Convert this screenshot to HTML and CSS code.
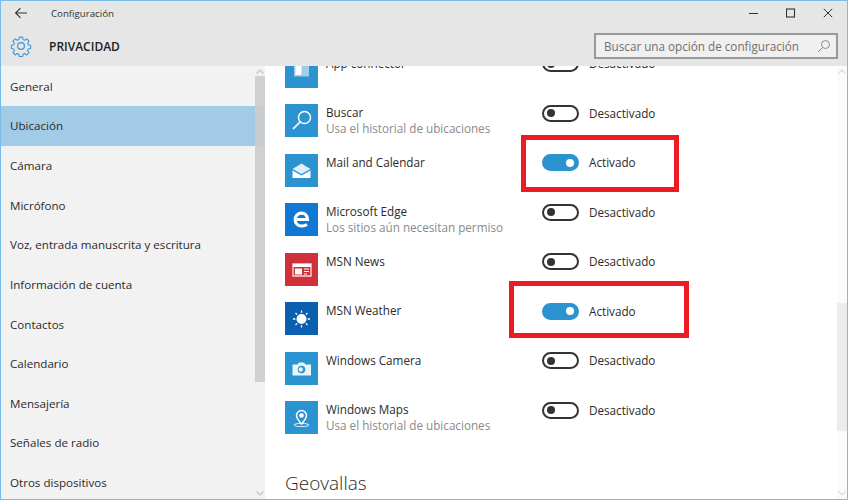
FILE: index.html
```html
<!DOCTYPE html>
<html lang="es">
<head>
<meta charset="utf-8">
<title>Configuración</title>
<link rel="stylesheet" href="styles.css">
</head>
<body>
<div class="window">
  <header class="header">
    <div class="titlebar">
      <svg class="back" width="14" height="12" viewBox="0 0 14 12"><path d="M13 6H2M6.500 1.200 1.600 6l4.900 4.800" fill="none" stroke="#333" stroke-width="1.100"/></svg>
      <span class="title">Configuración</span>
      <div class="controls">
        <svg width="10" height="10" viewBox="0 0 10 10"><path d="M0 5.500h9" stroke="#333" stroke-width="1"/></svg>
        <svg width="10" height="10" viewBox="0 0 10 10"><rect x=".5" y="1" width="8" height="8" fill="none" stroke="#333" stroke-width="1.100"/></svg>
        <svg width="10" height="10" viewBox="0 0 10 10"><path d="M.8.800l8.400 8.400M9.200.800.800 9.200" stroke="#333" stroke-width="1"/></svg>
      </div>
    </div>
    <div class="pagebar">
      <svg class="gear" width="22" height="22" viewBox="0 0 24 24" fill="none" stroke="#3a96d2" stroke-width="1.300" stroke-linejoin="round"><circle cx="12" cy="12" r="3.700"/><path d="M10 1.500h4l.6 3.100 1.900.8 2.700-1.800 2.800 2.800-1.800 2.700.8 1.900 3 .6v4l-3 .6-.8 1.900 1.800 2.700-2.800 2.800-2.700-1.800-1.900.8-.6 3h-4l-.6-3-1.900-.8-2.700 1.800-2.800-2.800 1.800-2.700-.8-1.900-3-.6v-4l3-.6.8-1.900-1.800-2.700 2.800-2.800 2.700 1.800 1.900-.8z" transform="translate(12 12) scale(.88) translate(-12 -12.500)"/></svg>
      <h1 class="page-name">PRIVACIDAD</h1>
      <div class="search">
        <span class="search-text">Buscar una opción de configuración</span>
        <svg width="14" height="14" viewBox="0 0 14 14" fill="none" stroke="#8a8a8a" stroke-width="1"><circle cx="8.500" cy="5.500" r="4"/><path d="M5.500 8.500 1 13"/></svg>
      </div>
    </div>
  </header>
  <div class="body">
    <nav class="sidebar">
      <a class="nav-item">General</a>
      <a class="nav-item selected">Ubicación</a>
      <a class="nav-item">Cámara</a>
      <a class="nav-item">Micrófono</a>
      <a class="nav-item">Voz, entrada manuscrita y escritura</a>
      <a class="nav-item">Información de cuenta</a>
      <a class="nav-item">Contactos</a>
      <a class="nav-item">Calendario</a>
      <a class="nav-item">Mensajería</a>
      <a class="nav-item">Señales de radio</a>
      <a class="nav-item">Otros dispositivos</a>
      <svg class="chev chev-up" width="8" height="5" viewBox="0 0 8 5"><path d="M.5 4.500 4 1l3.500 3.500" fill="none" stroke="#c4c4c4" stroke-width="1.200"/></svg>
      <div class="thumb side-thumb"></div>
      <svg class="chev chev-down" width="8" height="5" viewBox="0 0 8 5"><path d="M.5.500 4 4 7.500.500" fill="none" stroke="#c4c4c4" stroke-width="1.200"/></svg>
    </nav>
    <main class="content">
      <div class="rows">
        <div class="row">
          <div class="app blue"><svg width="33" height="33" viewBox="0 0 33 33"><rect x="9" y="8.500" width="15" height="13" fill="#fff" opacity=".55"/><rect x="10.500" y="10" width="6" height="10" fill="#fff"/></svg></div>
          <div class="info"><div class="name">App connector</div></div>
          <div class="toggle"></div><span class="state">Desactivado</span>
        </div>
        <div class="row">
          <div class="app blue"><svg width="33" height="33" viewBox="0 0 33 33" fill="none" stroke="#fff"><circle cx="19.500" cy="13.500" r="6" stroke-width="1.500"/><path d="M15 18 8 25" stroke-width="1.800" opacity=".85"/></svg></div>
          <div class="info"><div class="name">Buscar</div><div class="sub">Usa el historial de ubicaciones</div></div>
          <div class="toggle"></div><span class="state">Desactivado</span>
        </div>
        <div class="row">
          <div class="app blue"><svg width="33" height="33" viewBox="0 0 33 33"><path d="M7.500 15 16.500 9.500l9 5.500-9 5z" fill="#fff" opacity=".85"/><path d="M7.500 16.500l9 5 9-5v7.500h-18z" fill="#fff"/></svg></div>
          <div class="info"><div class="name">Mail and Calendar</div></div>
          <div class="toggle on"></div><span class="state">Activado</span>
        </div>
        <div class="row">
          <div class="app edge"><svg width="33" height="33" viewBox="0 0 33 33" fill="none" stroke="#fff" stroke-width="3.200"><path d="M10 16.500h12.500c0-4-2.500-6.300-6-6.300-3.800 0-6.300 2.900-6.300 6.500s2.600 6.300 6.500 6.300c2.300 0 4-.6 5.300-1.500"/></svg></div>
          <div class="info"><div class="name">Microsoft Edge</div><div class="sub">Los sitios aún necesitan permiso</div></div>
          <div class="toggle"></div><span class="state">Desactivado</span>
        </div>
        <div class="row">
          <div class="app red"><svg width="33" height="33" viewBox="0 0 33 33"><path d="M8 11h18v12H8z" fill="none" stroke="#fff" stroke-width="1.400" opacity=".8"/><rect x="8" y="11" width="18" height="3" fill="#fff"/><rect x="10" y="15.500" width="7" height="6" fill="#fff"/><path d="M19 16h5M19 18.500h5M19 21h3" stroke="#fff" stroke-width="1"/></svg></div>
          <div class="info"><div class="name">MSN News</div></div>
          <div class="toggle"></div><span class="state">Desactivado</span>
        </div>
        <div class="row">
          <div class="app navy"><svg width="33" height="33" viewBox="0 0 33 33"><circle cx="16.500" cy="17" r="5" fill="#fff"/><path d="M16.500 8.500v2.300M16.500 23.200v2.300M8 17h2.300M22.700 17H25M10.500 11l1.600 1.600M20.900 21.400l1.600 1.600M22.500 11l-1.600 1.600M12.100 21.400 10.500 23" stroke="#fff" stroke-width="1.300"/></svg></div>
          <div class="info"><div class="name">MSN Weather</div></div>
          <div class="toggle on"></div><span class="state">Activado</span>
        </div>
        <div class="row">
          <div class="app blue"><svg width="33" height="33" viewBox="0 0 33 33"><path d="M7.500 12.500h5l1.500-2h5l1.500 2h5.500v11h-18.500z" fill="#fff" opacity=".9"/><circle cx="16.500" cy="17.500" r="3.800" fill="#2a93d0"/><circle cx="15.800" cy="17.500" r="2.200" fill="#e4f1f9"/></svg></div>
          <div class="info"><div class="name">Windows Camera</div></div>
          <div class="toggle"></div><span class="state">Desactivado</span>
        </div>
        <div class="row">
          <div class="app blue"><svg width="33" height="33" viewBox="0 0 33 33" fill="none" stroke="#fff"><path d="M16.500 23c-2.500-2.800-5-5.500-5-8.500a5 5 0 0 1 10 0c0 3-2.500 5.700-5 8.500z" stroke-width="1.500"/><circle cx="16.500" cy="14.500" r="2.300" fill="#fff" stroke="none"/><ellipse cx="16.500" cy="24" rx="7.500" ry="1.600" stroke-width="1" opacity=".85"/></svg></div>
          <div class="info"><div class="name">Windows Maps</div><div class="sub">Usa el historial de ubicaciones</div></div>
          <div class="toggle"></div><span class="state">Desactivado</span>
        </div>
      </div>
      <h2 class="section">Geovallas</h2>
      <div class="track">
        <svg class="chev chev-up" width="8" height="5" viewBox="0 0 8 5"><path d="M.5 4.500 4 1l3.500 3.500" fill="none" stroke="#dcdcdc" stroke-width="1.200"/></svg>
        <div class="thumb main-thumb"></div>
        <svg class="chev chev-down" width="8" height="5" viewBox="0 0 8 5"><path d="M.5.500 4 4 7.500.500" fill="none" stroke="#dcdcdc" stroke-width="1.200"/></svg>
      </div>
    </main>
  </div>
  <div class="mark mark-one"></div>
  <div class="mark mark-two"></div>
</div>
</body>
</html>
```
FILE: styles.css
```css
* { box-sizing: border-box; }
html, body { margin: 0; padding: 0; background: #fff; }
body { font-family: "Open Sans", "Noto Sans", "Liberation Sans", sans-serif; color: #2b2b2b; }
.window { position: relative; width: 848px; height: 500px; border: 1px solid #76bdec; display: flex; flex-direction: column; overflow: hidden; background: #fff; }

.header { height: 65px; background: #e6e6e6; flex: none; }
.titlebar { height: 24px; display: flex; align-items: center; padding-left: 13px; }
.back { flex: none; }
.title { margin-left: 23px; font-size: 9.700px; color: #333; }
.controls { margin-left: auto; display: flex; gap: 27px; padding-right: 14px; align-items: center; }
.pagebar { height: 41px; display: flex; align-items: center; padding-left: 9px; padding-right: 9px; }
.gear { flex: none; }
.page-name { margin: 2px 0 0 17px; font-size: 12px; font-weight: 600; color: #222; }
.search { margin-left: auto; width: 244px; height: 26px; border: 2px solid #999; background: #f0f0f0; display: flex; align-items: center; justify-content: space-between; padding: 0 5px 0 8px; }
.search-text { font-size: 11.700px; color: #6f6f6f; }

.body { flex: 1; display: flex; min-height: 0; }
.sidebar { position: relative; width: 264px; flex: none; background: #f2f2f2; padding-top: .400px; overflow: hidden; display: flex; flex-direction: column; }
.nav-item { height: 39.650px; flex: none; display: flex; align-items: center; padding-left: 9px; font-size: 11.600px; color: #2b2b2b; }
.nav-item.selected { background: #a2cbe5; }
.chev { position: absolute; left: 1px; }
.sidebar .chev { left: 255px; }
.chev-up { top: 3px; }
.chev-down { bottom: 3px; }
.thumb { position: absolute; width: 10px; }
.side-thumb { left: 254px; top: 10px; height: 306px; background: #cdcdcd; opacity: .92; }

.content { position: relative; flex: 1; overflow: hidden; background: #fff; padding-left: 20px; }
.rows { margin-top: -11.500px; }
.row { height: 49.500px; display: flex; align-items: flex-start; }
.app { width: 33px; height: 33px; flex: none; }
.app svg { display: block; }
.blue { background: #2a93d0; }
.edge { background: #0f78d4; }
.red { background: #cf3039; }
.navy { background: #0a5fae; }
.info { width: 216px; margin-left: 8px; flex: none; }
.name { font-size: 11.700px; line-height: 16px; color: #2b2b2b; white-space: nowrap; }
.sub { margin-top: -.500px; font-size: 11.700px; line-height: 16px; color: #8a8a8a; white-space: nowrap; }
.toggle { position: relative; width: 37px; height: 17px; margin-top: .500px; border: 2px solid #333; border-radius: 9px; flex: none; }
.toggle::after { content: ""; position: absolute; left: 3px; top: 2.500px; width: 8px; height: 8px; border-radius: 50%; background: #333; }
.toggle.on { background: #2a93d0; border-color: #2a93d0; }
.toggle.on::after { left: auto; right: 3px; background: #fff; }
.state { margin: .500px 0 0 10px; font-size: 11.700px; line-height: 17px; color: #2b2b2b; }
.section { margin: 19.500px 0 0; font-size: 19px; font-weight: 300; line-height: 26px; color: #2b2b2b; }

.track { position: absolute; right: 0; top: 0; bottom: 0; width: 10px; background: #fbfbfb; }
.track .chev { left: 1px; }
.main-thumb { left: 0; top: 237px; height: 128px; background: #ececec; }

.mark { position: absolute; border: 5px solid #ed1c24; }
.mark-one { left: 520px; top: 134px; width: 158px; height: 57px; }
.mark-two { left: 508px; top: 280px; width: 180px; height: 57px; }
```
